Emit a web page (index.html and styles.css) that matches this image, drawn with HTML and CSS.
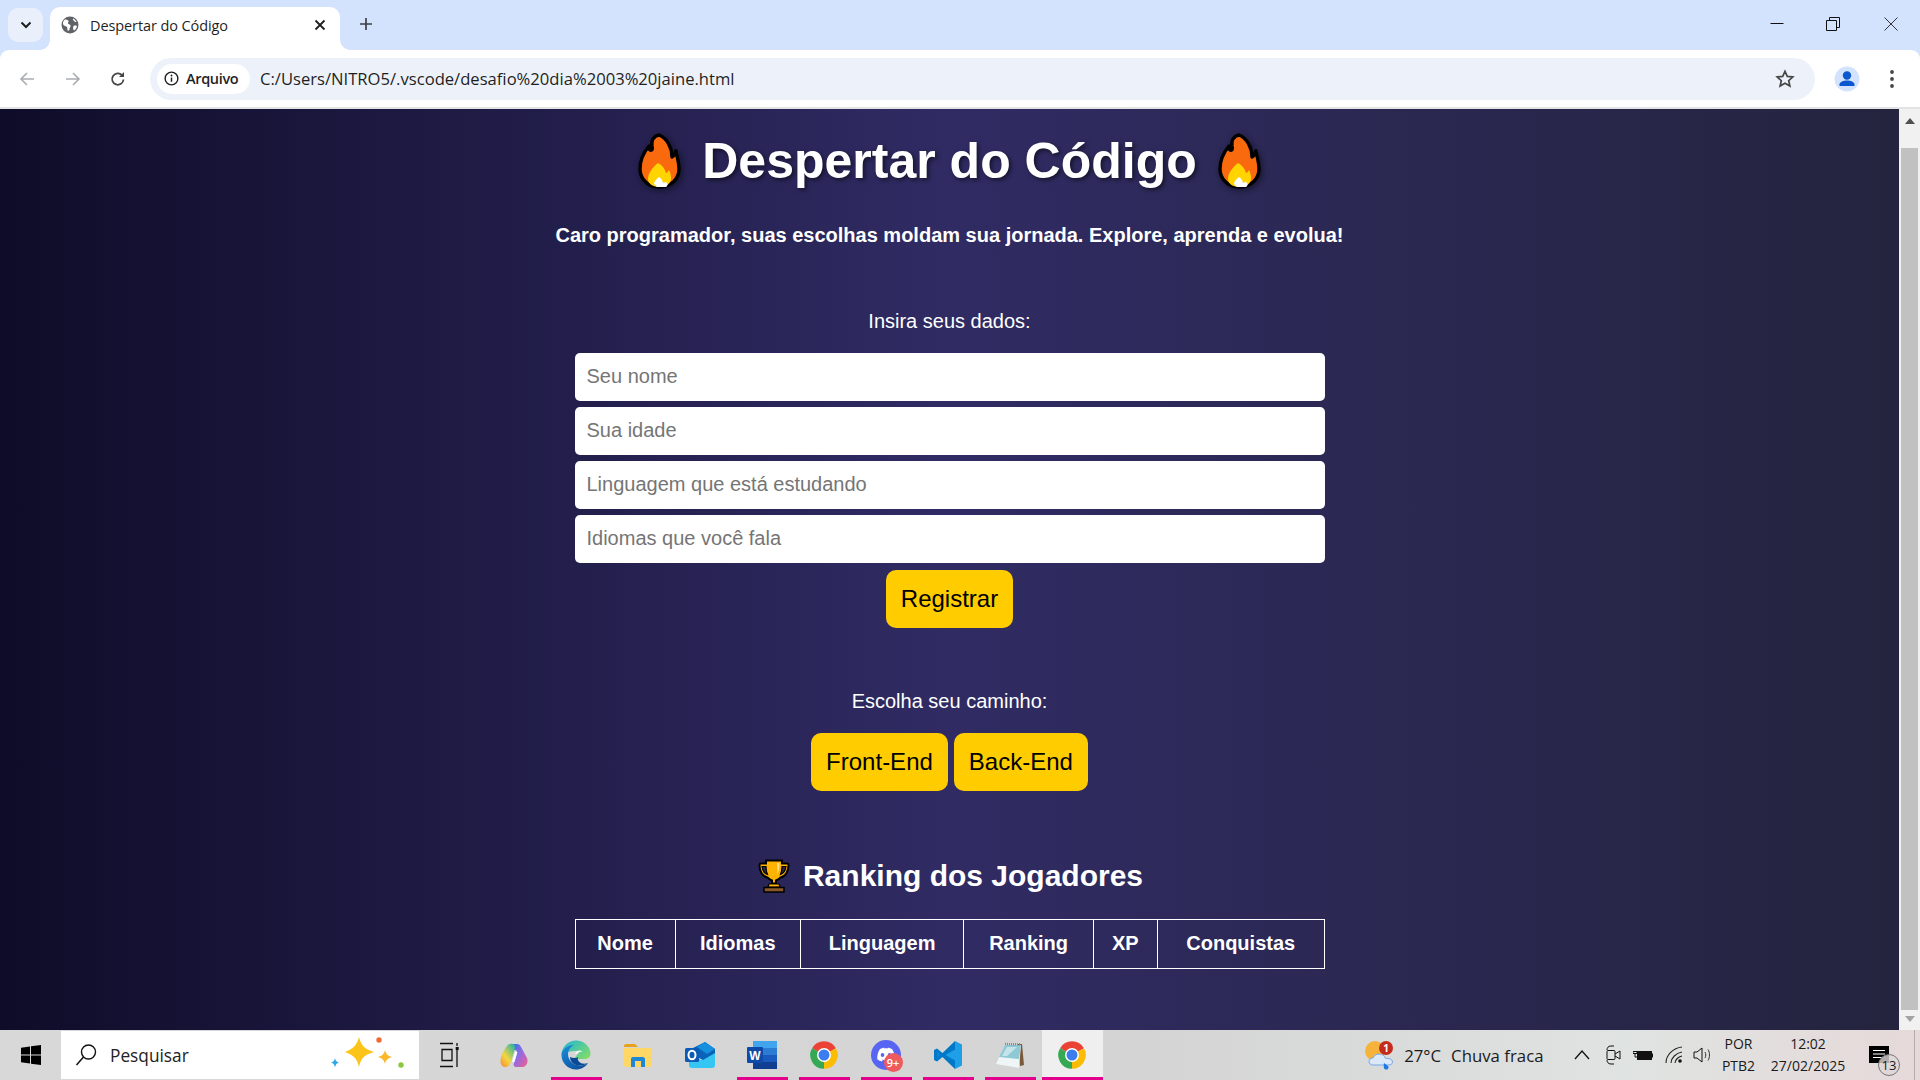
FILE: index.html
```html
<!DOCTYPE html>
<html lang="pt-BR">
<head>
<meta charset="utf-8">
<title>Despertar do Código</title>
<link rel="stylesheet" href="styles.css">
</head>
<body>
<svg class="defs" width="0" height="0" aria-hidden="true">
  <defs>
    <symbol id="chrome" viewBox="0 0 24 24">
      <path fill="#ea4335" d="M12 12 2.47 6.5A11 11 0 0 1 21.53 6.5Z"/>
      <path fill="#fbbc04" d="M12 12 21.53 6.5A11 11 0 0 1 12 23Z"/>
      <path fill="#34a853" d="M12 12 12 23A11 11 0 0 1 2.47 6.5Z"/>
      <circle cx="12" cy="12" r="5.600" fill="#fff"/>
      <circle cx="12" cy="12" r="4.400" fill="#3b7cf0"/>
    </symbol>
    <symbol id="fire" viewBox="0 0 43 56">
      <path fill="#f96a0f" stroke="#000" stroke-width="3.400" stroke-linejoin="round" d="M21 2c-5 1-8 5-7 11 1 3 0 5-2 4-1-.6-1-2-1-4-5 6-9 15-9 23 0 10 8 18 19 18 12 0 20-8 20-18 0-6-2-12-3-18-1 3-2 5-4 6 0-9-5-19-13-22Z"/>
      <path fill="#ffd400" d="M20 30c-5 4-10 10-10 16 0 4 4 8 11 8 8 0 12-4 12-9 0-3-1-6-2-8-1 2-2 3-3 3-1-4-4-8-8-10Z"/>
      <path fill="#fff" d="M21 44c-3 2-5 5-5 7l3 3h9c2-1 2-4 0-5-1 0-2 .5-3 1-.5-3-2-5-4-6Z"/>
      <path fill="none" stroke="#000" stroke-width="1.600" d="M15 7c.5-1.500 2-2.500 3-2.500"/>
    </symbol>
    <symbol id="trophy" viewBox="0 0 32 34">
      <path fill="#ffb300" stroke="#000" stroke-width="2" d="M8 1.500h16v3h5c1 0 1.500 1 1.500 2 0 6-3 11-8 12-1.500 1.500-3 2.500-4.500 3v3h-4v-3c-1.500-.5-3-1.500-4.500-3-5-1-8-6-8-12 0-1 .5-2 1.500-2h5Z"/>
      <path fill="#26264a" stroke="#000" stroke-width="1.200" d="M4 7.500h4c0 3 .5 5.500 1.500 8-3-1-5-4-5.500-8ZM28 7.500h-4c0 3-.5 5.500-1.500 8 3-1 5-4 5.500-8Z"/>
      <path fill="#ffe08a" d="M19 4h2.500c0 5-.8 9-2.500 11 .5-3 .5-7 0-11Z"/>
      <path fill="#ffb300" stroke="#000" stroke-width="1.200" d="M11 25h10l1 3H10Z"/>
      <path fill="#8a5a2b" stroke="#000" stroke-width="1.500" d="M6 28.500h20v4.500H6Z"/>
    </symbol>
  </defs>
</svg>

<header class="tabstrip">
  <button class="tabsearch" type="button" aria-label="Pesquisar guias">
    <svg width="12" height="8" viewBox="0 0 12 8"><path d="M1.500 1.500 6 6l4.500-4.500" fill="none" stroke="#1f1f1f" stroke-width="2"/></svg>
  </button>
  <div class="tab">
    <svg class="favicon" width="18" height="18" viewBox="0 0 18 18"><circle cx="9" cy="9" r="8.500" fill="#5f6368"/><path fill="#fff" d="M4 3.500c1.500 0 3 .5 3.500 1.500s-1 1.500-.5 2.500 2 .5 2.500 2-1 2-1 3.500-1 2-1.800 1.500c-.7-1 0-2.500-.7-3.500S3 10.500 2 8c-.3-2 .7-3.500 2-4.500ZM12 2.500c1.500.5 3 2 3.500 3.500-1 .3-2 0-2.500-1s-1.500-1-1-2.500ZM13 9.500c1 0 2.500 0 3 .5-.3 2-1.500 3.500-3 4.500-1-1-1.500-3.500 0-5Z"/></svg>
    <span class="tabtitle">Despertar do Código</span>
    <svg class="tabclose" width="12" height="12" viewBox="0 0 12 12"><path d="M1.500 1.500l9 9m0-9-9 9" stroke="#1f1f1f" stroke-width="1.800"/></svg>
  </div>
  <svg class="newtab" width="14" height="14" viewBox="0 0 14 14"><path d="M7 1v12M1 7h12" stroke="#3c3f43" stroke-width="1.700"/></svg>
  <div class="wincontrols">
    <svg class="wc-min" width="14" height="14" viewBox="0 0 14 14"><path d="M0.500 6.500h13" stroke="#111" stroke-width="1"/></svg>
    <svg class="wc-max" width="14" height="14" viewBox="0 0 14 14"><path d="M.5 3.500h10v10H.5ZM3.500 3.500V.5h10v10h-3" fill="none" stroke="#111"/></svg>
    <svg width="14" height="14" viewBox="0 0 14 14"><path d="M.5.5l13 13m0-13-13 13" stroke="#333" stroke-width="1"/></svg>
  </div>
</header>

<nav class="toolbar">
  <svg class="navicon" width="16" height="16" viewBox="0 0 16 16"><path d="M15 8H2M8 2 2 8l6 6" fill="none" stroke="#a9acb0" stroke-width="1.600"/></svg>
  <svg class="navicon" width="16" height="16" viewBox="0 0 16 16"><path d="M1 8h13M8 2l6 6-6 6" fill="none" stroke="#a9acb0" stroke-width="1.600"/></svg>
  <svg class="navicon" width="16" height="16" viewBox="0 0 16 16"><path d="M13.500 8.500A5.700 5.700 0 1 1 12 4.200" fill="none" stroke="#444746" stroke-width="1.800"/><path d="M14 1v5H9Z" fill="#444746"/></svg>
  <div class="omnibox">
    <div class="chip">
      <svg width="15" height="15" viewBox="0 0 16 16"><circle cx="8" cy="8" r="6.800" fill="none" stroke="#1f1f1f" stroke-width="1.500"/><path d="M8 7v4.500" stroke="#1f1f1f" stroke-width="1.600"/><circle cx="8" cy="4.800" r="1" fill="#1f1f1f"/></svg>
      <span>Arquivo</span>
    </div>
    <span class="url">C:/Users/NITRO5/.vscode/desafio%20dia%2003%20jaine.html</span>
    <svg class="star" width="20" height="20" viewBox="0 0 20 20"><path d="M10 2.300l2.300 5.100 5.500.6-4.100 3.700 1.200 5.400-4.900-2.800-4.900 2.800 1.200-5.400L2.200 8l5.500-.6Z" fill="none" stroke="#444746" stroke-width="1.700"/></svg>
  </div>
  <svg class="avatar" width="26" height="26" viewBox="0 0 26 26"><circle cx="13" cy="13" r="12.500" fill="#d3e3fd"/><circle cx="13" cy="9.500" r="4.200" fill="#0b57d0"/><path d="M5.500 20v-1.500c0-2.500 4-4 7.500-4s7.500 1.500 7.500 4V20Z" fill="#0b57d0"/></svg>
  <svg class="menu" width="6" height="20" viewBox="0 0 6 20"><circle cx="3" cy="3" r="1.900" fill="#444746"/><circle cx="3" cy="10" r="1.900" fill="#444746"/><circle cx="3" cy="17" r="1.900" fill="#444746"/></svg>
</nav>

<div class="viewport">
  <main class="page">
    <h1 class="title"><svg class="emoji-fire"><use href="#fire"/></svg><span>Despertar do Código</span><svg class="emoji-fire"><use href="#fire"/></svg></h1>
    <p class="lead">Caro programador, suas escolhas moldam sua jornada. Explore, aprenda e evolua!</p>

    <section class="register">
      <p class="label">Insira seus dados:</p>
      <input class="field" type="text" placeholder="Seu nome">
      <input class="field" type="text" placeholder="Sua idade">
      <input class="field" type="text" placeholder="Linguagem que está estudando">
      <input class="field" type="text" placeholder="Idiomas que você fala">
      <button class="action" type="button">Registrar</button>
    </section>

    <section class="path">
      <p class="label">Escolha seu caminho:</p>
      <div class="choices">
        <button class="action" type="button">Front-End</button>
        <button class="action" type="button">Back-End</button>
      </div>
    </section>

    <section class="ranking">
      <h2 class="ranktitle"><svg class="emoji-trophy"><use href="#trophy"/></svg><span>Ranking dos Jogadores</span></h2>
      <table class="ranktable">
        <thead>
          <tr><th>Nome</th><th>Idiomas</th><th>Linguagem</th><th>Ranking</th><th>XP</th><th>Conquistas</th></tr>
        </thead>
      </table>
    </section>
  </main>
  <div class="scrollbar">
    <svg class="sbarrow" width="10" height="6" viewBox="0 0 10 6"><path d="M5 0l5 6H0Z" fill="#505050"/></svg>
    <div class="sbthumb"></div>
    <svg class="sbarrow sbarrow-down" width="10" height="6" viewBox="0 0 10 6"><path d="M5 6 0 0h10Z" fill="#a3a3a3"/></svg>
  </div>
</div>

<footer class="taskbar">
  <div class="start">
    <svg width="20" height="20" viewBox="0 0 20 20"><path fill="#000" d="M0 2.800 9 1.500v8H0ZM10 1.300 20 0v9.500H10ZM0 10.500h9v8L0 17.200ZM10 10.500h10V20L10 18.700Z"/></svg>
  </div>
  <div class="search">
    <svg width="22" height="24" viewBox="0 0 22 24"><circle cx="13.500" cy="9" r="7" fill="none" stroke="#111" stroke-width="1.400"/><path d="M8.500 14 1.500 22" stroke="#111" stroke-width="1.500"/></svg>
    <span class="searchtext">Pesquisar</span>
    <svg class="sparkles" width="78" height="42" viewBox="0 0 78 42">
      <path fill="#fcc419" d="M30 3c2 8 5 12 15 15-10 3-13 6-15 15-2-9-6-12-14-15 8-3 12-7 14-15Z"/>
      <path fill="#fcb72b" d="M56 16c1 4 3 6 7 7-4 1-6 3-7 7-1-4-3-6-7-7 4-1 6-3 7-7Z"/>
      <path fill="#29a8ea" d="M6 24c.5 3 2 4 4 4.500-2 .5-3.500 2-4 5-.5-3-2-4.500-4-5 2-.5 3.500-1.500 4-4.500Z"/>
      <circle cx="50" cy="6" r="2.700" fill="#ee6b33"/>
      <circle cx="72" cy="31" r="2.700" fill="#8cc63f"/>
    </svg>
  </div>
  <div class="apps">
    <div class="app app-taskview">
      <svg width="20" height="26" viewBox="0 0 20 26"><path d="M0 1.500h13M0 24.500h13M2 7.500h10v11H2ZM17 1v3M17 8v17" fill="none" stroke="#111" stroke-width="1.300"/><rect x="15.700" y="5" width="3" height="3" fill="#111"/></svg>
    </div>
    <div class="app">
      <svg width="28" height="25" viewBox="0 0 28 25"><defs><linearGradient id="cop1" x1="0" y1="0" x2="1" y2="1"><stop offset="0" stop-color="#2a6fe0"/><stop offset=".45" stop-color="#8f6be8"/><stop offset="1" stop-color="#f2608a"/></linearGradient><linearGradient id="cop2" x1="0" y1="1" x2=".8" y2="0"><stop offset="0" stop-color="#f28a3c"/><stop offset=".45" stop-color="#f4d63f"/><stop offset="1" stop-color="#35b8a0"/></linearGradient></defs><path fill="url(#cop1)" d="M13 1h4c2 0 3 1 4 3l6 11c1.500 4-.5 9-5 9h-6c-2 0-3-2-2-4l3-10c.5-2-.5-3-2-3h-3Z"/><path fill="url(#cop2)" d="M7 3c1-1.500 3-2.500 6-2 2 .5 2.500 3 1.500 6L11 19c-1 3-3 5-5.500 5C2 24 0 21 .5 17c.5-5 3-10 6.500-14Z"/><path fill="#fff" opacity=".9" d="M15 9h2.500l-3 10H12Z"/></svg>
    </div>
    <div class="app is-open">
      <svg width="30" height="30" viewBox="0 0 30 30"><defs><linearGradient id="edg1" x1="0" y1="0" x2="1" y2=".8"><stop offset="0" stop-color="#1fb5d9"/><stop offset="1" stop-color="#7fdc6a"/></linearGradient><linearGradient id="edg2" x1="0" y1="0" x2=".7" y2="1"><stop offset="0" stop-color="#1d8fe0"/><stop offset="1" stop-color="#0b4f9e"/></linearGradient></defs><path fill="url(#edg1)" d="M.5 15C.5 7 7 .5 15 .5c8 0 14.500 6 14.500 13.500 0 3.500-3 5-6 5H14c1-4 5-7 5-7-4-2-12-1-18.500 3Z"/><path fill="url(#edg2)" d="M.5 15C1 8 8 5 13 5c-4 2-6 5-6 9 0 7 6 12 13 11.500 2.500 0 5-1 7-2.500-2.500 4-7 6.500-12 6.500C7 29.500.5 23 .5 15Z"/><path fill="#0a4a94" d="M9 17c0 5.500 5 9 11 8.500 2 0 5-1 7-2.500-3 1-6 1-8-.5s-3-3.500-1.500-5.500C16 18 12 18.500 9 17Z"/><path fill="#f4faf6" d="M14 14c.5-2 2.500-3.500 4.500-3.500 1.500 0 2.500.7 3 1.500-2-.7-4-.3-5 1-.5.7-1.500 1.500-2.500 1Z"/></svg>
    </div>
    <div class="app">
      <svg width="28" height="23" viewBox="0 0 28 23"><path fill="#e8a21a" d="M0 2c0-1 .7-2 2-2h8c1 0 1.500.5 2 1l2 2h-14Z"/><path fill="#ffd766" d="M0 4h26c1 0 2 .8 2 2v15c0 1-1 2-2 2H2c-1 0-2-1-2-2Z"/><path fill="#1e88d6" d="M7 23v-8c0-1 .7-2 2-2h10c1 0 2 1 2 2v8h-4v-6h-6v6Z"/></svg>
    </div>
    <div class="app">
      <svg width="30" height="26" viewBox="0 0 30 26"><path fill="#36c6f4" d="M4 11l12 7 14-8v13c0 2-1 3-3 3H7c-2 0-3-1-3-3Z"/><path fill="#0a63b8" d="M6 7 20 0l10 7v4l-12 7L6 12Z"/><path fill="#1490df" d="M20 0l10 7-8 5-10-7Z"/><rect x="0" y="6" width="14" height="14" rx="1.500" fill="#0a5bb5"/><ellipse cx="7" cy="13" rx="3.500" ry="4.300" fill="none" stroke="#fff" stroke-width="2"/></svg>
    </div>
    <div class="app is-open">
      <svg width="30" height="28" viewBox="0 0 30 28"><rect x="6" y="0" width="24" height="28" rx="1" fill="#185abd"/><rect x="6" y="0" width="24" height="7" fill="#41a5ee"/><rect x="6" y="7" width="24" height="7" fill="#2b7cd3"/><rect x="6" y="21" width="24" height="7" fill="#103f91"/><rect x="0" y="6" width="16" height="16" rx="1" fill="#0f4aa8"/><text class="wordmark" x="8" y="18.500" text-anchor="middle">W</text></svg>
    </div>
    <div class="app is-open"><svg class="chromeicon"><use href="#chrome"/></svg></div>
    <div class="app is-open">
      <div class="discord">
        <svg width="30" height="30" viewBox="0 0 30 30"><circle cx="15" cy="15" r="15" fill="#5865f2"/><path fill="#fff" d="M9 9c2-1 3.500-1.300 4-1.300l.4.8c1-.2 2.200-.2 3.200 0l.4-.8c.5 0 2 .3 4 1.300 2 3 3 6.500 2.700 10.300-1.500 1.200-3 1.800-4.500 2.200l-1-1.500c.6-.2 1-.4 1.500-.7-3 1.300-6.400 1.300-9.400 0 .5.300 1 .5 1.500.7l-1 1.500c-1.500-.4-3-1-4.500-2.200C6 15.500 7 12 9 9Z"/><ellipse cx="11.500" cy="15" rx="1.800" ry="2" fill="#5865f2"/><ellipse cx="18.500" cy="15" rx="1.800" ry="2" fill="#5865f2"/></svg>
        <span class="badge9">9+</span>
      </div>
    </div>
    <div class="app is-open">
      <svg width="30" height="30" viewBox="0 0 30 30"><path fill="#0078c8" d="M22 1 9.500 13 4 8.500 1 10v10l3 1.500 5.500-4.500L22 29Z"/><path fill="#1e9fe8" d="M22 1l7 3.500v21L22 29V9.500L12.500 15 22 20.500Z"/><path fill="#0a86d6" d="M4 11.500 7 15l-3 3.500Z"/></svg>
    </div>
    <div class="app is-open">
      <svg width="28" height="27" viewBox="0 0 28 27"><path fill="#7a5a3a" d="M21 2h5l2 21-4 1Z"/><path fill="#eef5f6" d="M9 3 25 3 23 26 0 22Z"/><path fill="#8fc9d6" d="M9 3 25 3 23 17 3 15Z"/><path fill="#c5e4ea" d="M11 5 21 5 11 14 6 14Z"/><path d="M9 2 25 2.500" stroke="#888" stroke-width="2.400" stroke-dasharray="1 1"/></svg>
    </div>
    <div class="app is-open is-active"><svg class="chromeicon"><use href="#chrome"/></svg></div>
  </div>
  <div class="tray">
    <svg class="weather" width="30" height="30" viewBox="0 0 30 30"><circle cx="10" cy="11" r="10" fill="#f6b33c"/><path fill="#dbe8f8" stroke="#7aa7e6" stroke-width="1" d="M8 25c-2.500 0-4-1.500-4-3.500S5.500 18 8 18c1-2.500 3-4 6-4 3.500 0 6 2 6.500 4.500 3-.5 7 .5 7 3.500 0 2-2 3-4.500 3Z"/><path fill="#1a7ae8" d="M19 23l4 3c1.500 2-.5 4-2.500 3.500S18.500 26 19 23Z"/><circle cx="21" cy="8" r="7" fill="#c42b1c"/><text class="weatherbadge" x="21" y="11.500" text-anchor="middle">1</text></svg>
    <span class="temp">27°C</span>
    <span class="cond">Chuva fraca</span>
    <svg class="chev" width="16" height="10" viewBox="0 0 16 10"><path d="M1 9l7-8 7 8" fill="none" stroke="#111" stroke-width="1.300"/></svg>
    <svg class="cam" width="15" height="22" viewBox="0 0 15 22"><path d="M1 6c0-2 1-4 4-4h3M1 16c0 2 1 4 4 4h3" fill="none" stroke="#111"/><rect x="1" y="6.500" width="8" height="9" rx="1" fill="none" stroke="#111"/><path d="M9 10l5-3v8l-5-3" fill="none" stroke="#111"/></svg>
    <svg class="batt" width="20" height="14" viewBox="0 0 20 14"><rect x="4" y="3" width="15" height="9" fill="#111"/><rect x="19" y="5.500" width="1" height="4" fill="#111"/><path d="M0 3.500h4v2H0ZM2 5.500V9h2" stroke="#111" stroke-width="1" fill="none"/></svg>
    <svg class="wifi" width="18" height="18" viewBox="0 0 18 18"><path d="M1 17C1 9 8 2 17 1M6 17c0-5 5-10 11-11M10 17c0-3 3-6 7-7" fill="none" stroke="#222" stroke-width="1.100"/><circle cx="15" cy="15" r="1.800" fill="#111"/></svg>
    <svg class="speaker" width="19" height="18" viewBox="0 0 19 18"><path d="M1 6h3l5-4v14l-5-4H1Z" fill="none" stroke="#111"/><path d="M12 6c1 2 1 4 0 6M15 3.500c2 3 2 8 0 11" fill="none" stroke="#333"/></svg>
    <div class="lang"><span>POR</span><span>PTB2</span></div>
    <div class="clock"><span>12:02</span><span>27/02/2025</span></div>
    <div class="notif">
      <svg class="notificon" width="20" height="17" viewBox="0 0 20 17"><path fill="#000" d="M0 0h20v17H0Z"/><path d="M4 4.500h12M4 8h12M4 11.500h9" stroke="#fff" stroke-width="1.200"/></svg>
      <span class="notifcount">13</span>
    </div>
    <div class="showdesktop"></div>
  </div>
</footer>
</body>
</html>
```
FILE: styles.css
```css
* { box-sizing: border-box; }
html, body { height: 100%; }
body {
  margin: 0;
  height: 100vh;
  overflow: hidden;
  display: flex;
  flex-direction: column;
  font-family: "Liberation Sans", Arial, sans-serif;
  background: #d3e3fd;
}
.defs { position: absolute; }

/* Browser chrome */
.tabstrip {
  height: 50px;
  flex: none;
  display: flex;
  align-items: flex-start;
  background: #d3e3fd;
  padding: 8px 0 0 8px;
}
.tabsearch {
  width: 35px;
  height: 34px;
  border: 0;
  padding: 0;
  border-radius: 10px;
  background: #e9f0fc;
  display: flex;
  align-items: center;
  justify-content: center;
}
.tab {
  position: relative;
  width: 290px;
  height: 43px;
  margin: -1px 0 0 7px;
  background: #fff;
  border-radius: 10px 10px 0 0;
  display: flex;
  align-items: center;
  padding: 0 14px 7px 11px;
}
.tab::before, .tab::after {
  content: "";
  position: absolute;
  bottom: 0;
  width: 10px;
  height: 10px;
}
.tab::before { left: -10px; background: radial-gradient(circle at 0 0, transparent 9.500px, #fff 10px); }
.tab::after { right: -10px; background: radial-gradient(circle at 100% 0, transparent 9.500px, #fff 10px); }
.favicon { flex: none; }
.tabtitle {
  flex: 1;
  margin-left: 11px;
  font: 14.500px "Open Sans", "Noto Sans", sans-serif;
  color: #1f1f1f;
  letter-spacing: -.1px;
}
.tabclose { flex: none; }
.newtab { margin: 9px 0 0 19px; }
.wincontrols {
  margin-left: auto;
  display: flex;
  padding: 9px 22px 0 0;
}
.wc-min { margin-right: 42px; }
.wc-max { margin-right: 44px; }

.toolbar {
  height: 59px;
  flex: none;
  background: #fff;
  border-radius: 9px 9px 0 0;
  border-bottom: 2px solid #e3e3e3;
  display: flex;
  align-items: center;
  padding-left: 19px;
}
.navicon { margin-right: 29.500px; flex: none; }
.omnibox {
  width: 1665px;
  height: 42px;
  margin-left: -5.500px;
  border-radius: 21px;
  background: #edf2fa;
  display: flex;
  align-items: center;
  padding: 0 20px 0 7px;
}
.chip {
  width: 93px;
  height: 30px;
  border-radius: 15px;
  background: #fff;
  display: flex;
  align-items: center;
  gap: 7px;
  padding-left: 7px;
  font: 600 14.500px "Open Sans", "Noto Sans", sans-serif;
  letter-spacing: -.35px;
  color: #1f1f1f;
}
.url {
  margin-left: 10px;
  font: 16.630px "Open Sans", "Noto Sans", sans-serif;
  color: #1f1f1f;
}
.star { margin-left: auto; }
.avatar { margin-left: 19px; flex: none; }
.menu { margin-left: 29px; flex: none; }

/* Page */
.viewport {
  flex: 1;
  min-height: 0;
  display: flex;
}
.page {
  flex: 1;
  min-width: 0;
  overflow: hidden;
  background: linear-gradient(90deg, #0f0c29, #302b63, #24243e);
  color: #fff;
  text-align: center;
  display: flex;
  flex-direction: column;
  align-items: center;
}
.title {
  margin: 22px 0 0;
  font-size: 50px;
  line-height: 60px;
  font-weight: 700;
  text-shadow: 2px 2px 4px rgba(0,0,0,.55);
  display: flex;
  align-items: center;
  gap: 21px;
}
.emoji-fire { width: 43px; height: 56px; filter: drop-shadow(2px 2px 3px rgba(0,0,0,.45)); }
.lead {
  margin: 32px 0 0;
  font-size: 20px;
  line-height: 24px;
  font-weight: 700;
}
.register, .path, .ranking {
  width: 750px;
  display: flex;
  flex-direction: column;
  align-items: center;
}
.register { margin-top: 62px; }
.label { margin: 0 0 20px; font-size: 20px; line-height: 24px; }
.field {
  width: 100%;
  height: 48px;
  margin-bottom: 6px;
  padding: 0 12px 2px;
  border: 0;
  border-radius: 5px;
  background: #fff;
  font: 20px "Liberation Sans", Arial, sans-serif;
}
.field::placeholder { color: #757575; }
.action {
  height: 58px;
  padding: 0 15px;
  border: 0;
  border-radius: 10px;
  background: #ffcc00;
  color: #000;
  font: 24px "Liberation Sans", Arial, sans-serif;
}
.register .action { margin-top: 1px; }
.path { margin-top: 61px; }
.choices { display: flex; gap: 6px; }
.ranking { margin-top: 65px; }
.ranktitle {
  margin: 0 0 23px 2px;
  font-size: 30px;
  line-height: 40px;
  display: flex;
  align-items: center;
  gap: 13px;
}
.emoji-trophy { width: 32px; height: 34px; }
.ranktable {
  width: 750px;
  border-collapse: collapse;
  font-size: 20px;
}
.ranktable th {
  border: 1px solid #fff;
  padding: 11px 12px 13px;
  line-height: 24px;
  font-weight: 700;
}

.scrollbar {
  width: 21px;
  flex: none;
  background: #f1f1f1;
  display: flex;
  flex-direction: column;
  align-items: center;
  padding-top: 9px;
}
.sbthumb { width: 17px; flex: 1; margin: 24px 0 6px; background: #c1c1c1; }
.sbarrow { flex: none; }
.sbarrow-down { margin-bottom: 8px; }

/* Taskbar */
.taskbar {
  height: 50px;
  flex: none;
  display: flex;
  align-items: center;
  background: linear-gradient(90deg, #d8d8d8 0, #d4d4d4 60%, #dfe3e1 85%, #e6d9d9 100%);
  font-family: "Open Sans", "Noto Sans", sans-serif;
  color: #111;
}
.start { width: 61px; display: flex; justify-content: center; }
.search {
  width: 358px;
  height: 48px;
  background: #fff;
  display: flex;
  align-items: center;
  padding-left: 14px;
}
.searchtext { margin-left: 13px; font-size: 17.300px; color: #222; }
.sparkles { margin-left: auto; margin-right: 12px; }
.apps { display: flex; gap: 11px; margin-left: 8px; height: 50px; }
.app {
  width: 51px;
  height: 50px;
  display: flex;
  align-items: center;
  justify-content: center;
  padding: 3px 2px 0 0;
  border-bottom: 3px solid transparent;
}
.app-taskview { padding-right: 6px; }
.app.is-open { border-bottom-color: #e3008c; }
.app.is-active { width: 61px; margin-left: -5px; background: #efefef; }
.chromeicon { width: 30px; height: 30px; }
.wordmark { font: 700 12px "Liberation Sans", sans-serif; fill: #fff; }
.discord { position: relative; width: 30px; height: 30px; }
.badge9 {
  position: absolute;
  right: -2px;
  bottom: -2px;
  width: 19px;
  height: 19px;
  border-radius: 50%;
  background: #ee5a5e;
  color: #fff;
  font: 600 11px/19px "Open Sans", sans-serif;
  text-align: center;
}
.tray {
  margin-left: auto;
  display: flex;
  align-items: center;
  height: 50px;
  font-size: 16.800px;
  color: #1a1a1a;
}
.weather { flex: none; }
.weatherbadge { font: 700 10px "Open Sans", sans-serif; fill: #fff; }
.temp { margin-left: 9px; }
.cond { margin-left: 10px; }
.chev { margin-left: 30px; }
.cam { margin-left: 16px; }
.batt { margin-left: 12px; }
.wifi { margin-left: 12px; }
.speaker { margin-left: 10px; }
.lang, .clock {
  display: flex;
  flex-direction: column;
  align-items: center;
  font-size: 14px;
  line-height: 22px;
}
.lang { margin-left: 9px; width: 36px; }
.clock { margin-left: 14.500px; width: 74px; }
.notif { position: relative; width: 31px; height: 30px; margin: 11px 14px 0 24px; }
.notificon { display: block; }
.notifcount {
  position: absolute;
  right: 0;
  bottom: 0;
  width: 22px;
  height: 22px;
  border-radius: 50%;
  border: 1px solid #777;
  background: rgba(222,215,215,.8);
  font-size: 13px;
  line-height: 20px;
  text-align: center;
}
.showdesktop { width: 1px; height: 50px; margin-right: 5px; background: #b5adad; }
```
